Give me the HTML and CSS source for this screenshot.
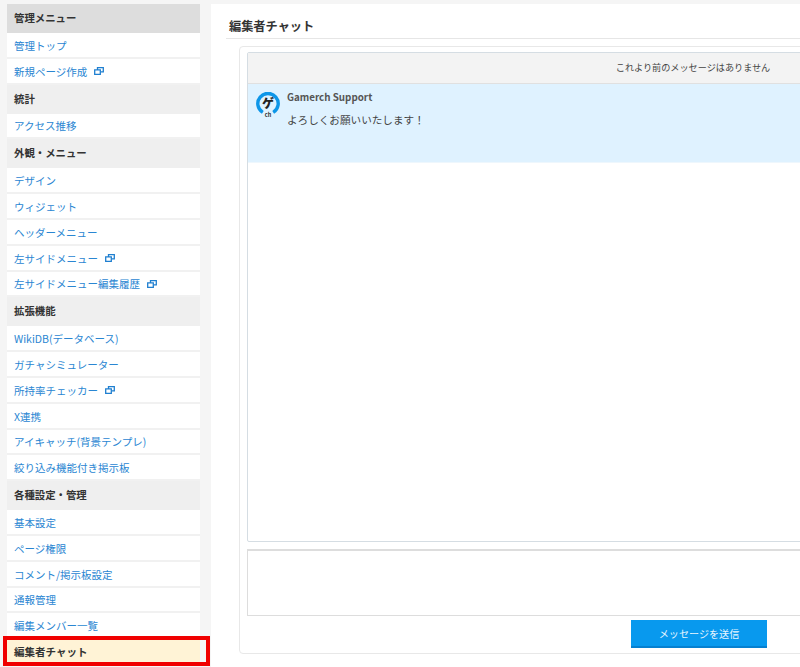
FILE: index.html
```html
<!DOCTYPE html>
<html lang="ja">
<head>
    <meta charset="UTF-8">
    <meta name="viewport" content="width=device-width, initial-scale=1.0">
    <title>編集者チャット</title>
    <link rel="stylesheet" href="styles.css">
</head>
<body>
    <svg class="icon-defs" width="0" height="0">
        <symbol id="ext" viewBox="0 0 10 8">
            <path d="M3.5 2.5V.7h5.8v4.2H7M.7 2.9h5.6v4.4H.7z" fill="none" stroke="currentColor" stroke-width="1.3"/>
        </symbol>
    </svg>
    <div class="page">
        <nav class="sidebar">
            <div class="menu-head menu-head-top">管理メニュー</div>
            <a class="menu-item">管理トップ</a>
            <a class="menu-item">新規ページ作成<svg class="ext-icon"><use href="#ext"/></svg></a>
            <div class="menu-head">統計</div>
            <a class="menu-item">アクセス推移</a>
            <div class="menu-head">外観・メニュー</div>
            <a class="menu-item">デザイン</a>
            <a class="menu-item">ウィジェット</a>
            <a class="menu-item">ヘッダーメニュー</a>
            <a class="menu-item">左サイドメニュー<svg class="ext-icon"><use href="#ext"/></svg></a>
            <a class="menu-item">左サイドメニュー編集履歴<svg class="ext-icon"><use href="#ext"/></svg></a>
            <div class="menu-head">拡張機能</div>
            <a class="menu-item">WikiDB(データベース)</a>
            <a class="menu-item">ガチャシミュレーター</a>
            <a class="menu-item">所持率チェッカー<svg class="ext-icon"><use href="#ext"/></svg></a>
            <a class="menu-item">X連携</a>
            <a class="menu-item">アイキャッチ(背景テンプレ)</a>
            <a class="menu-item">絞り込み機能付き掲示板</a>
            <div class="menu-head">各種設定・管理</div>
            <a class="menu-item">基本設定</a>
            <a class="menu-item">ページ権限</a>
            <a class="menu-item">コメント/掲示板設定</a>
            <a class="menu-item">通報管理</a>
            <a class="menu-item">編集メンバー一覧</a>
            <a class="menu-item menu-item-active">編集者チャット<span class="highlight"></span></a>
        </nav>
        <main class="content">
            <h1 class="page-title">編集者チャット</h1>
            <div class="chat-card">
                <div class="chat-box">
                    <div class="chat-notice">これより前のメッセージはありません</div>
                    <div class="chat-message">
                        <svg class="avatar" viewBox="0 0 24 26">
                            <path d="M6.8 20.4A10.2 10.2 0 1 1 17.2 20.4" fill="none" stroke="#0d96e8" stroke-width="3.4"/>
                            <text x="12" y="15.6" text-anchor="middle" class="avatar-kana">ゲ</text>
                            <text x="12" y="25.4" text-anchor="middle" class="avatar-ch">ch</text>
                        </svg>
                        <div class="message-body">
                            <div class="message-author">Gamerch Support</div>
                            <div class="message-text">よろしくお願いいたします！</div>
                        </div>
                    </div>
                </div>
                <div class="chat-input"></div>
                <div class="chat-actions">
                    <button type="button" class="send-button">メッセージを送信</button>
                </div>
            </div>
        </main>
    </div>
</body>
</html>
```

FILE: styles.css
```css
* {
    margin: 0;
    padding: 0;
    box-sizing: border-box;
    font-family: "Noto Sans CJK JP", "Noto Sans", sans-serif;
}

html, body {
    height: 100%;
    overflow: hidden;
}

body {
    background-color: #f5f5f5;
}

.icon-defs {
    display: block;
    height: 0;
}

.page {
    display: flex;
    align-items: flex-start;
    height: 667px;
    padding-top: 4px;
    overflow: hidden;
}

.sidebar {
    width: 193px;
    margin-left: 7px;
    flex-shrink: 0;
    display: flex;
    flex-direction: column;
}

.menu-head {
    height: 29px;
    padding: 0 0 1px 7px;
    line-height: 28px;
    background-color: #efefef;
    color: #333;
    font-size: 10.4px;
    font-weight: 700;
}

.menu-head-top {
    background-color: #dddddd;
}

.menu-item {
    position: relative;
    display: flex;
    align-items: center;
    height: 25.8px;
    padding: 1px 0 0 7px;
    background-color: #fff;
    border-bottom: 2px solid #f1f1f1;
    color: #2a86d2;
    font-size: 10.5px;
}

.menu-item-active {
    height: 25px;
    padding-top: 0;
    background-color: #fff3d6;
    color: #333;
    font-weight: 700;
    border-bottom: none;
}

.highlight {
    position: absolute;
    top: -3px;
    left: -4px;
    width: 207px;
    height: 30px;
    border: 4px solid #f00000;
}

.ext-icon {
    width: 10px;
    height: 8px;
    margin-left: 7px;
    color: #1f7fd0;
}

.content {
    width: 950px;
    height: 663px;
    flex-shrink: 0;
    margin-left: 11px;
    padding: 15px 0 0 15px;
    background-color: #fff;
}

.page-title {
    height: 20px;
    line-height: 15px;
    padding-left: 3px;
    border-bottom: 1px solid #e6e6e6;
    color: #333;
    font-size: 12.2px;
    font-weight: 700;
}

.chat-card {
    width: 908px;
    height: 608px;
    margin: 7px 0 0 13px;
    padding: 5px 7px;
    border: 1px solid #e8e8e8;
    border-radius: 4px;
}

.chat-box {
    height: 490px;
    border: 1px solid #d5dde3;
    border-radius: 2px;
}

.chat-notice {
    height: 31px;
    line-height: 29px;
    text-align: center;
    background-color: #f3f3f3;
    border-bottom: 1px solid #e0e0e0;
    color: #444;
    font-size: 9.15px;
}

.chat-message {
    display: flex;
    height: 79px;
    padding: 7px 8px 0;
    background-color: #dff2ff;
    border-bottom: 1px solid #eef7fd;
}

.avatar {
    width: 24px;
    height: 26px;
    margin-top: 1px;
    flex-shrink: 0;
}

.avatar-kana {
    font-size: 12px;
    font-weight: 900;
    fill: #222;
}

.avatar-ch {
    font-size: 5.5px;
    font-weight: 700;
    fill: #333;
}

.message-body {
    margin-left: 7px;
}

.message-author {
    line-height: 12px;
    color: #555;
    font-size: 9.8px;
    font-weight: 700;
}

.message-text {
    margin-top: 9px;
    line-height: 16px;
    color: #444;
    font-size: 10.6px;
}

.chat-input {
    height: 67px;
    margin-top: 7px;
    border: 1px solid #ddd;
    border-top-width: 2px;
    background-color: #fff;
}

.chat-actions {
    padding: 4px 0 0 384px;
}

.send-button {
    display: block;
    width: 136px;
    height: 28px;
    background-color: #0899ee;
    border: none;
    border-bottom: 2px solid #0580d0;
    color: #e8f6ff;
    font-size: 10.1px;
    cursor: pointer;
}
```
